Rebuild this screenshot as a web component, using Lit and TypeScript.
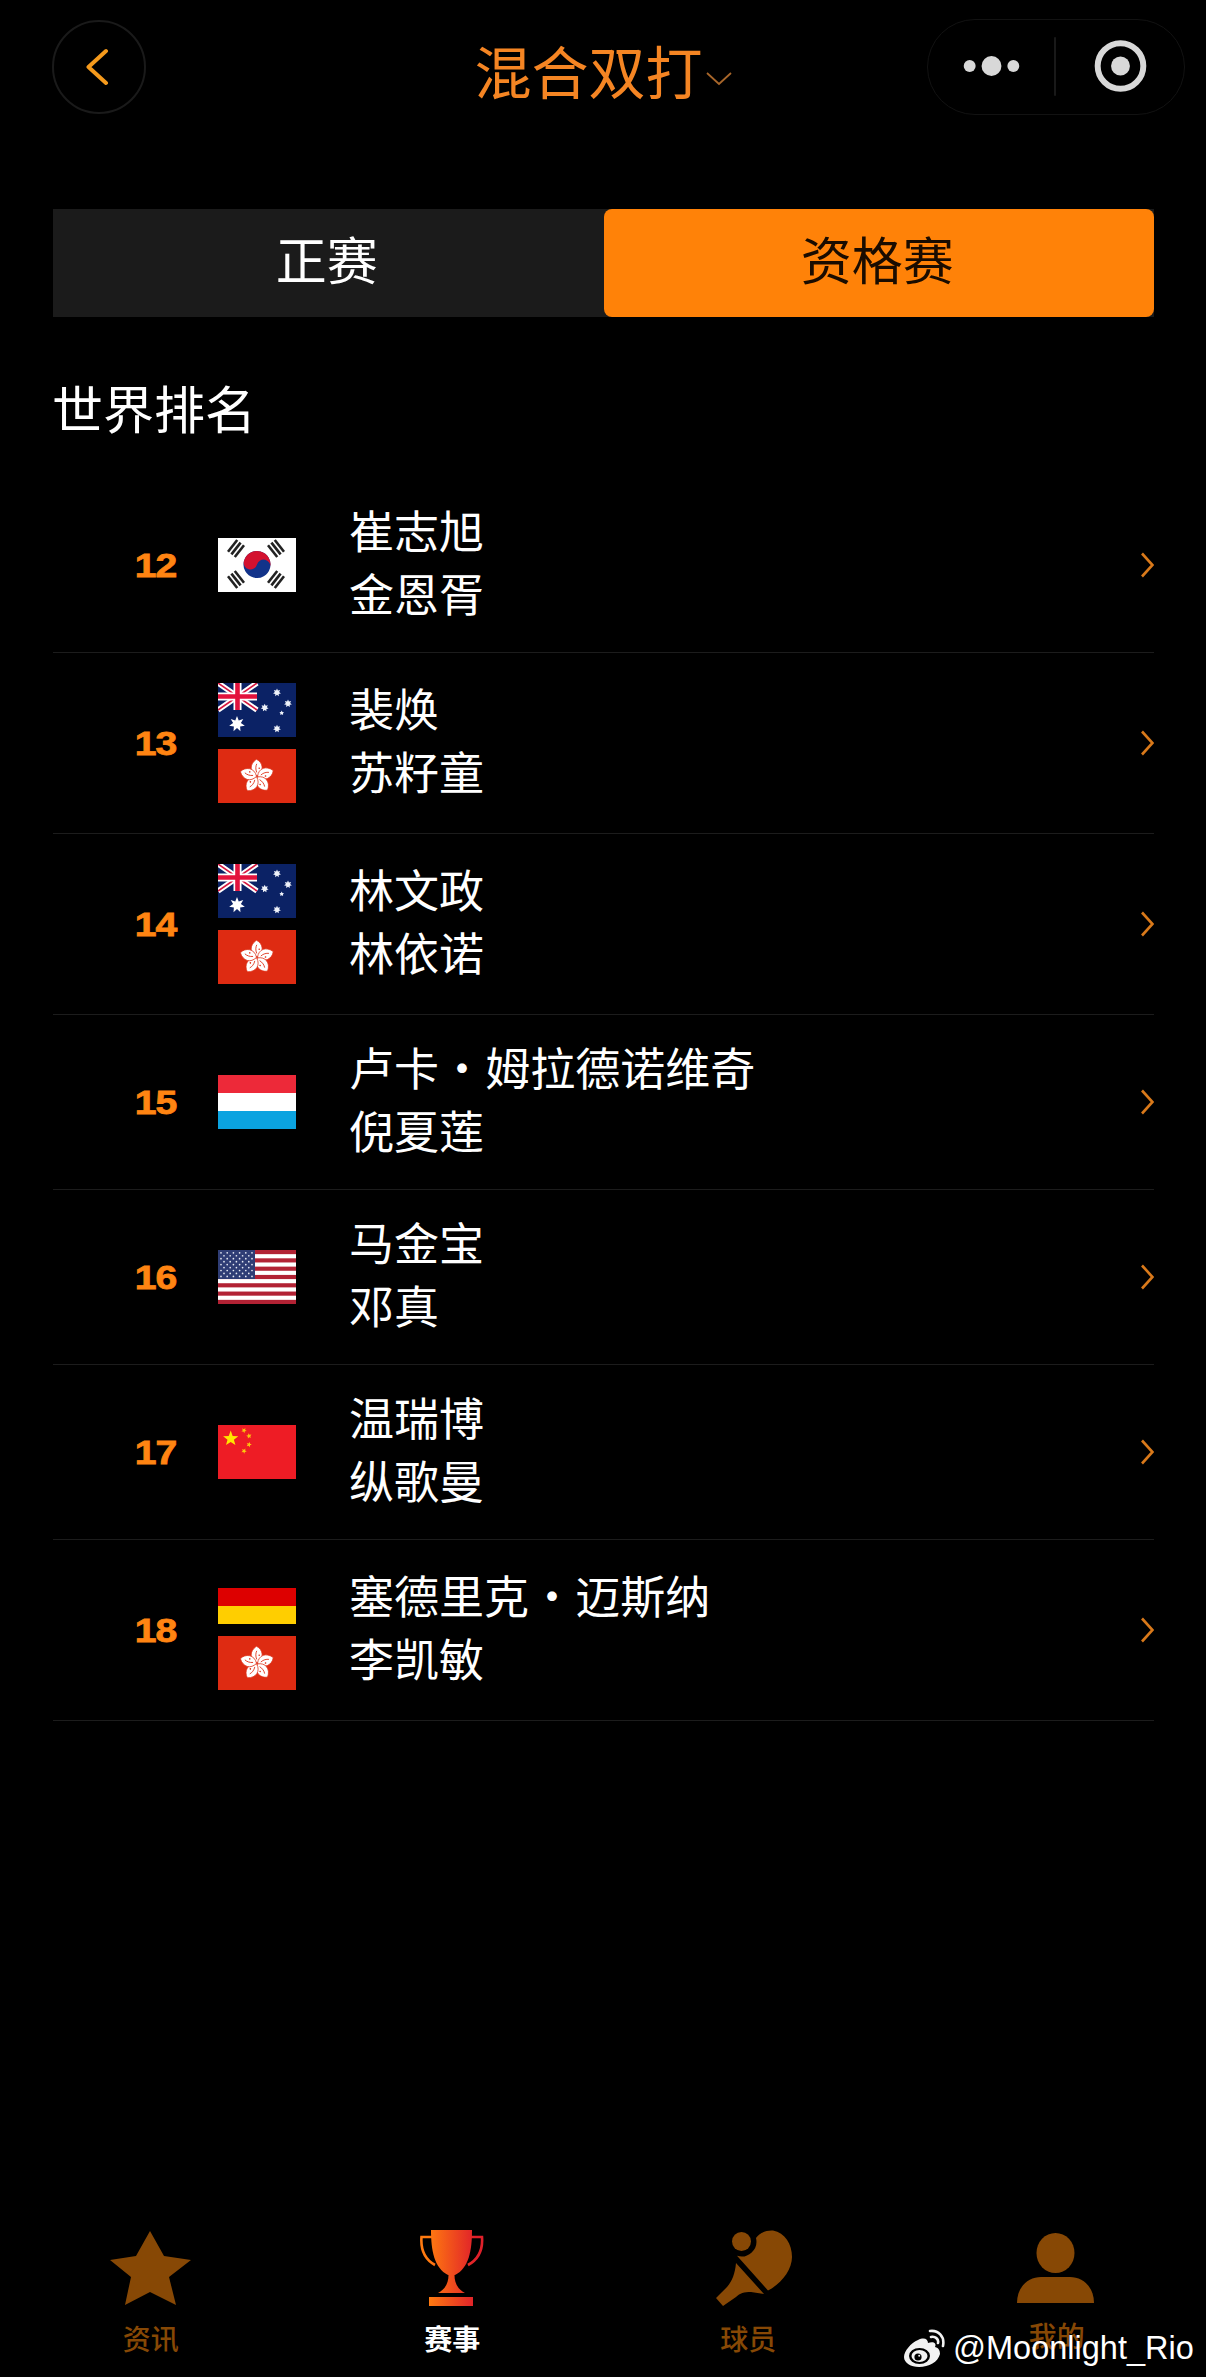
import { LitElement, html, svg, css } from 'lit';
import { customElement } from 'lit/decorators.js';

// n-pointed star as a polygon points string
const starPoints = (cx: number, cy: number, r: number, n = 5, inner = 0.42, start = -90) => {
  const pts: string[] = [];
  for (let i = 0; i < n * 2; i++) {
    const a = ((start + (i * 180) / n) * Math.PI) / 180;
    const rr = i % 2 ? r * inner : r;
    pts.push(`${(cx + rr * Math.cos(a)).toFixed(2)},${(cy + rr * Math.sin(a)).toFixed(2)}`);
  }
  return pts.join(' ');
};

const flagSvg = (body: unknown) => html`<svg class="flag" viewBox="0 0 78 54" width="78" height="54">${body}</svg>`;

const trigram = (x: number, y: number, rot: number) => svg`
  <g transform="translate(${x} ${y}) rotate(${rot})" fill="#222">
    <rect x="-5.6" y="-7.5" width="2.6" height="15"></rect>
    <rect x="-1.3" y="-7.5" width="2.6" height="15"></rect>
    <rect x="3" y="-7.5" width="2.6" height="15"></rect>
  </g>`;

const flags: Record<string, () => unknown> = {
  kr: () => flagSvg(svg`
    <rect width="78" height="54" fill="#fff"></rect>
    ${trigram(18, 10.5, 38)}${trigram(58, 10.5, -38)}${trigram(18, 41.5, -38)}${trigram(58, 41.5, 38)}
    <g transform="translate(39 26.5) rotate(15)">
      <circle r="13.5" fill="#12338a"></circle>
      <path d="M-13.5 0A13.5 13.5 0 0 1 13.5 0A6.75 6.75 0 0 0 0 0A6.75 6.75 0 0 1 -13.5 0Z" fill="#d3112f"></path>
    </g>`),
  au: () => flagSvg(svg`
    <rect width="78" height="54" fill="#0b2265"></rect>
    <path d="M0 0L39 27M39 0L0 27" stroke="#fff" stroke-width="5.5"></path>
    <path d="M0 0L39 27M39 0L0 27" stroke="#d6173f" stroke-width="1.6"></path>
    <path d="M19.5 0V27M0 13.5H39" stroke="#fff" stroke-width="8"></path>
    <path d="M19.5 0V27M0 13.5H39" stroke="#e3123c" stroke-width="4.6"></path>
    <polygon points="${starPoints(19, 41, 8, 7, 0.5)}" fill="#fff"></polygon>
    <g fill="#eef2fa">
      <polygon points="${starPoints(59, 9.6, 4, 7, 0.55)}"></polygon>
      <polygon points="${starPoints(70, 20.5, 4, 7, 0.55)}"></polygon>
      <polygon points="${starPoints(46.7, 24.7, 4, 7, 0.55)}"></polygon>
      <polygon points="${starPoints(63.7, 30, 2.4, 5, 0.55)}"></polygon>
      <polygon points="${starPoints(59, 45.7, 4, 7, 0.55)}"></polygon>
    </g>`),
  hk: () => flagSvg(svg`
    <rect width="78" height="54" fill="#de2b12"></rect>
    ${[0, 72, 144, 216, 288].map((a) => svg`
      <g transform="translate(39 27.5) rotate(${a + 8})">
        <path d="M0 -.5C-8 -3 -9.5 -11 -3 -17C4 -15 7 -6 0 -.5Z" fill="#fff" stroke="#de2b12" stroke-width=".7"></path>
        <path d="M-.8 -4C-2.6 -7 -2.8 -10 -2 -12.5" stroke="#de2b12" stroke-width=".8" fill="none"></path>
        <circle cx="1" cy="-8.5" r=".8" fill="#de2b12"></circle>
      </g>`)}`),
  lu: () => flagSvg(svg`
    <rect width="78" height="18" fill="#ed2939"></rect>
    <rect y="18" width="78" height="18" fill="#fff"></rect>
    <rect y="36" width="78" height="18" fill="#0ba3e0"></rect>`),
  us: () => flagSvg(svg`
    <rect width="78" height="54" fill="#fff"></rect>
    ${[0, 2, 4, 6, 8, 10, 12].map((i) => svg`<rect y="${(i * 54) / 13}" width="78" height="${54 / 13}" fill="#b22234"></rect>`)}
    <rect width="37" height="29" fill="#2f3d75"></rect>
    ${[0, 1, 2, 3, 4, 5, 6, 7, 8].map((r) =>
      Array.from({ length: r % 2 ? 5 : 6 }, (_, c) =>
        svg`<circle cx="${3 + (r % 2 ? 3 : 0) + c * 6.2}" cy="${2.8 + r * 2.95}" r=".85" fill="#e8ebf5"></circle>`))}`),
  cn: () => flagSvg(svg`
    <rect width="78" height="54" fill="#ee1c25"></rect>
    <polygon points="${starPoints(12.7, 13.6, 8)}" fill="#ffe600"></polygon>
    <g fill="#fcc60e">
      <polygon points="${starPoints(26, 5.4, 2.8, 5, 0.45, -60)}"></polygon>
      <polygon points="${starPoints(31, 11, 2.8, 5, 0.45, -30)}"></polygon>
      <polygon points="${starPoints(31, 19.6, 2.8, 5, 0.45, 0)}"></polygon>
      <polygon points="${starPoints(26, 26, 2.8, 5, 0.45, -60)}"></polygon>
    </g>`),
  de: () => flagSvg(svg`
    <rect width="78" height="18" fill="#000"></rect>
    <rect y="18" width="78" height="18" fill="#dd0000"></rect>
    <rect y="36" width="78" height="18" fill="#ffce00"></rect>`),
};

const rows = [
  { rank: 12, flags: ['kr'], names: ['崔志旭', '金恩胥'] },
  { rank: 13, flags: ['au', 'hk'], names: ['裴焕', '苏籽童'] },
  { rank: 14, flags: ['au', 'hk'], names: ['林文政', '林依诺'] },
  { rank: 15, flags: ['lu'], names: ['卢卡 · 姆拉德诺维奇', '倪夏莲'] },
  { rank: 16, flags: ['us'], names: ['马金宝', '邓真'] },
  { rank: 17, flags: ['cn'], names: ['温瑞博', '纵歌曼'] },
  { rank: 18, flags: ['de', 'hk'], names: ['塞德里克 · 迈斯纳', '李凯敏'] },
];

@customElement('app-root')
export class AppRoot extends LitElement {
  static styles = css`
    :host {
      display: block;
      background: #000;
      font-family: 'Noto Sans CJK SC', 'Noto Sans', sans-serif;
      color: #fff;
    }
    .page {
      position: relative;
      min-height: 2377px;
      display: flex;
      flex-direction: column;
      overflow: hidden;
    }
    .nav {
      display: grid;
      grid-template-columns: 1fr auto 1fr;
      align-items: center;
      padding: 19px 21px 0;
    }
    .back {
      width: 94px;
      height: 94px;
      margin-left: 31px;
      box-sizing: border-box;
      border: 2px solid #1a1a1a;
      border-radius: 50%;
      display: flex;
      align-items: center;
      justify-content: center;
    }
    .title {
      display: flex;
      align-items: center;
      gap: 3px;
      padding-top: 5px;
      font-size: 57px;
      line-height: 91px;
      color: #f58523;
    }
    .title svg {
      margin-top: 18px;
    }
    .capsule {
      justify-self: end;
      width: 258px;
      height: 96px;
      box-sizing: border-box;
      border: 1.5px solid #121212;
      border-radius: 48px;
      display: flex;
      align-items: center;
    }
    .tabs {
      display: flex;
      margin: 94px 52px 0 53px;
      height: 108px;
      background: #1b1b1b;
    }
    .tab {
      flex: 1;
      display: flex;
      align-items: center;
      justify-content: center;
      box-sizing: border-box;
      padding: 0 3px 10px 0;
      font-size: 51px;
      border-radius: 8px;
    }
    .tab.active {
      background: #ff8208;
      color: #1a0c00;
    }
    h2 {
      margin: 55px 0 1px 52px;
      font-size: 51px;
      font-weight: 400;
      line-height: 70px;
    }
    .list {
      margin: 35px 52px 0 53px;
      flex: 1;
    }
    .row {
      display: grid;
      grid-template-columns: 123px 78px 1fr auto;
      column-gap: 42px;
      align-items: center;
      border-bottom: 1px solid #1c1c1c;
    }
    .rank {
      text-align: right;
      font-family: 'Liberation Sans', Arial, sans-serif;
      font-weight: 700;
      font-size: 34px;
      letter-spacing: -1px;
      color: #ff8412;
      -webkit-text-stroke: 0.8px #ff8412;
      transform: scaleX(1.15);
      transform-origin: right center;
    }
    .flags {
      display: flex;
      flex-direction: column;
      gap: 12px;
      padding: 30px 0;
    }
    .flag {
      display: block;
    }
    .names {
      margin-left: 11px;
      padding: 20px 0 28px;
      font-size: 45px;
      line-height: 63px;
      word-spacing: -9.5px;
    }
    .arrow {
      display: block;
    }
    .tabbar {
      display: grid;
      grid-template-columns: repeat(4, 1fr);
      padding-bottom: 19px;
    }
    .item {
      display: flex;
      flex-direction: column;
      align-items: center;
      gap: 12px;
    }
    .icon {
      height: 76px;
      display: flex;
      align-items: center;
    }
    .label {
      font-size: 28px;
      font-weight: 500;
      line-height: 40px;
      color: #874805;
    }
    .label.current {
      color: #fff;
      font-weight: 700;
    }
    .label.shift {
      margin-right: 11px;
    }
    .label.raised {
      margin-top: -3px;
      margin-bottom: 3px;
      margin-left: 3px;
    }
    .mark {
      position: absolute;
      left: 904px;
      top: 2328px;
      display: flex;
      align-items: center;
      gap: 7px;
      font-family: 'Liberation Sans', Arial, sans-serif;
      font-size: 32.5px;
      line-height: 40px;
      color: #fff;
      white-space: nowrap;
    }
  `;

  renderTrophy() {
    return html`<svg width="66" height="76" viewBox="0 0 66 76">
      <defs>
        <linearGradient id="cup" gradientUnits="userSpaceOnUse" x1="10" y1="0" x2="56" y2="0">
          <stop offset="0" stop-color="#ff7a10"></stop>
          <stop offset="1" stop-color="#e0202a"></stop>
        </linearGradient>
      </defs>
      <path d="M12 0H53C53 20 50 38 36 45H29C15 38 12 20 12 0Z" fill="url(#cup)"></path>
      <path d="M29.5 45h6C35.5 52 38 59 46 63H19C27 59 29.5 52 29.5 45Z" fill="url(#cup)"></path>
      <path d="M10 67H54V76H10Z" fill="url(#cup)"></path>
      <path d="M13 7H2.5C1.5 20 5 29 16 35M52 7H63C64 20 60 29 49 35" fill="none" stroke="url(#cup)" stroke-width="2.6"></path>
    </svg>`;
  }

  render() {
    return html`<div class="page">
      <div class="nav">
        <div class="back">
          <svg width="26" height="40" viewBox="0 0 26 40">
            <path d="M20 4L2.5 20L20 36" fill="none" stroke="#f59a1c" stroke-width="4" stroke-linecap="round" stroke-linejoin="round"></path>
          </svg>
        </div>
        <div class="title">
          混合双打
          <svg width="26" height="14" viewBox="0 0 26 14">
            <path d="M1 1L13 12L25 1" fill="none" stroke="#a8662a" stroke-width="1.8"></path>
          </svg>
        </div>
        <div class="capsule">
          <svg width="258" height="96" viewBox="0 0 258 96">
            <g fill="#d8d8d8">
              <circle cx="42" cy="47" r="6"></circle>
              <circle cx="64" cy="47" r="10"></circle>
              <circle cx="86" cy="47" r="6"></circle>
              <circle cx="194" cy="47" r="9.5"></circle>
            </g>
            <path d="M128 18V77" stroke="#222" stroke-width="1.5"></path>
            <circle cx="194" cy="47" r="23" fill="none" stroke="#d8d8d8" stroke-width="6"></circle>
          </svg>
        </div>
      </div>

      <div class="tabs">
        <div class="tab">正赛</div>
        <div class="tab active">资格赛</div>
      </div>

      <h2>世界排名</h2>

      <div class="list">
        ${rows.map(
          (r) => html`<div class="row">
            <div class="rank">${r.rank}</div>
            <div class="flags">${r.flags.map((f) => flags[f]())}</div>
            <div class="names">${r.names.map((n) => html`<div>${n}</div>`)}</div>
            <svg class="arrow" width="14" height="26" viewBox="0 0 14 26">
              <path d="M2 1.5L12.5 13L2 24.5" fill="none" stroke="#d9791a" stroke-width="2.6"></path>
            </svg>
          </div>`
        )}
      </div>

      <div class="tabbar">
        <div class="item">
          <div class="icon">
            <svg width="81" height="74" viewBox="0 0 81 74">
              <polygon points="40,0 54,25 81,29 59,46 66,74 40,61 15,74 21,46 0,29 26,25" fill="#874805"></polygon>
            </svg>
          </div>
          <div class="label">资讯</div>
        </div>
        <div class="item">
          <div class="icon">${this.renderTrophy()}</div>
          <div class="label current">赛事</div>
        </div>
        <div class="item">
          <div class="icon">
            <svg width="77" height="76" viewBox="0 0 77 76" fill="#874805">
              <circle cx="26.5" cy="11.5" r="9.5"></circle>
              <path d="M22 25.8A15 15 0 0 0 41 8C44 3 52 0 58 .6C70 3 77 14 77 27C77 40 66 54 53 60.5Z"></path>
              <path d="M21 33L49 64L36 62C29 62 25 63 21 67L8 76L1 68L12 57C17 51 20 44 21 33Z"></path>
            </svg>
          </div>
          <div class="label shift">球员</div>
        </div>
        <div class="item">
          <div class="icon">
            <svg width="77" height="70" viewBox="0 0 77 70" fill="#874805">
              <ellipse cx="38.5" cy="20" rx="19" ry="20"></ellipse>
              <path d="M0 70C0 53 12 44 24 44H53C65 44 77 53 77 70Z"></path>
            </svg>
          </div>
          <div class="label raised">我的</div>
        </div>
      </div>

      <div class="mark">
        <svg width="42" height="38" viewBox="0 0 42 38">
          <path d="M14 11C20 8 24 10 24 14C29 12 33 14 31 18C35 19 36 22 36 25C34 33 25 38 15 38C7 38 0 34 0 28C0 22 7 14 14 11Z" fill="#f2f2f2"></path>
          <ellipse cx="15.5" cy="27" rx="10.5" ry="8" fill="#000"></ellipse>
          <ellipse cx="15.5" cy="27" rx="8" ry="6" fill="#f2f2f2"></ellipse>
          <circle cx="14" cy="28" r="3.6" fill="#000"></circle>
          <circle cx="15.2" cy="26.8" r="1" fill="#f2f2f2"></circle>
          <path d="M27 8C31 7 35 10 34 14M26 2C34 1 41 7 39 17" fill="none" stroke="#f2f2f2" stroke-width="2.6" stroke-linecap="round"></path>
        </svg>
        <span>@Moonlight_Rio</span>
      </div>
    </div>`;
  }
}
